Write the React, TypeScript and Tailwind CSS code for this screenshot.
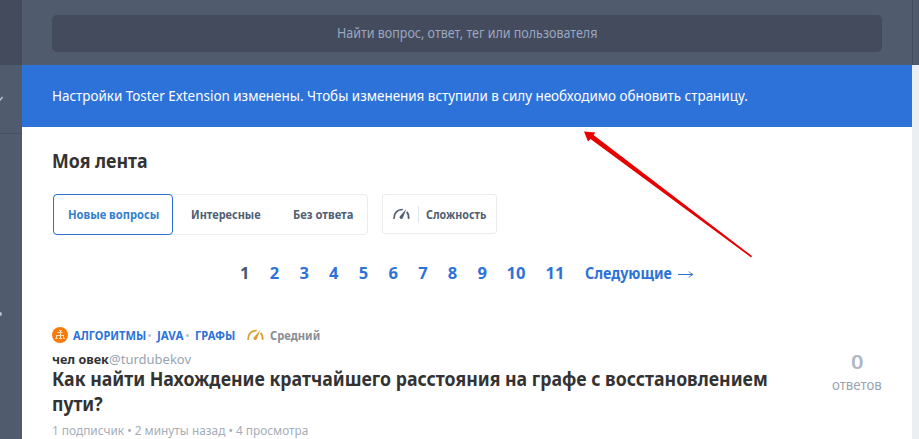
import { useLayoutEffect, useRef } from "react";

type FitProps = { children: string; className: string };

// One line of text, condensed horizontally to the width of its box.
function Fit({ children, className }: FitProps) {
  const box = useRef<HTMLSpanElement>(null);
  const text = useRef<HTMLSpanElement>(null);
  useLayoutEffect(() => {
    if (!box.current || !text.current) return;
    const ratio = box.current.clientWidth / text.current.offsetWidth;
    text.current.style.transform = `scaleX(${ratio})`;
  }, []);
  return (
    <span ref={box} className={`block shrink-0 whitespace-nowrap ${className}`}>
      <span ref={text} className="inline-block origin-left">
        {children}
      </span>
    </span>
  );
}

function Gauge({ className }: { className: string }) {
  return (
    <svg viewBox="0 0 17 12" className={`h-3 w-[17px] shrink-0 ${className}`} fill="none" stroke="currentColor">
      <path d="M1.2 10.800C.7 5.200 4 1.600 9.800 1.500" strokeWidth="1.7" />
      <path d="M13.7 3.900C15.200 5.500 15.900 7.700 15.600 10.800" strokeWidth="1.7" />
      <path d="M13.300 1 9.800 10a1.700 1.700 0 0 1-3.100-1.500Z" fill="currentColor" stroke="none" />
    </svg>
  );
}

function TagIcon() {
  return (
    <svg viewBox="0 0 16 16" className="h-4 w-4 shrink-0">
      <circle cx="8" cy="8" r="8" fill="#f97a0b" />
      <g fill="none" stroke="#ffe0bd" strokeWidth="1">
        <path d="M8.500 3v9M5.500 5.500h5M4.500 8.500h7M4.500 8v3M11.500 8v3" />
        <path d="M7 3.500h3M3 11.500h3M7 11.500h3M11 11.500h2" />
      </g>
    </svg>
  );
}

const pages = ["2", "3", "4", "5", "6", "7", "8", "9"];

export default function App() {
  return (
    <div className="flex h-[439px] w-[919px] overflow-hidden bg-white font-['Noto_Sans','Open_Sans',sans-serif]">
      <aside className="flex w-[22px] shrink-0 flex-col bg-[#505b6e]">
        <div className="h-[65px] bg-[#434b5d]" />
        <div className="h-[69px] border-b border-[#465064] pt-[31px]">
          <svg viewBox="0 0 4 6" className="h-1.5 w-1" fill="none" stroke="#b4bfd0" strokeWidth="1.5">
            <path d="M-2 1 0 4 2.6 1" />
          </svg>
        </div>
        <div className="mt-[178px] h-1 w-0.5 rounded-r-full bg-[#b4bfd0]" />
      </aside>

      <main className="relative flex w-[890px] shrink-0 flex-col">
        <header className="flex h-[65px] shrink-0 bg-[#505b6e] px-[30px] pt-[15px]">
          <div className="flex h-[37px] w-full justify-center rounded-[5px] bg-[#434b5d] text-[#9ba7c0]">
            <Fit className="w-[260px] text-[13.5px] leading-[36px]">Найти вопрос, ответ, тег или пользователя</Fit>
          </div>
        </header>
        <div className="h-[62px] shrink-0 bg-[#2d72d9] px-[30px] text-white">
          <Fit className="w-[696px] text-[14.5px] leading-[61px]">
            Настройки Toster Extension изменены. Чтобы изменения вступили в силу необходимо обновить страницу.
          </Fit>
        </div>

        <div className="px-[30px] pt-[18px]">
          <h1 className="text-[#333]">
            <Fit className="h-[30px] w-24 text-[20px] font-bold leading-[32px]">Моя лента</Fit>
          </h1>

          <div className="mt-[19px] flex items-start pl-px text-[12.5px] font-bold leading-[38px] text-[#505f74]">
            <div className="flex h-[41px] w-[315px] rounded-sm border border-[#ececec]">
              <div className="-ml-px -mt-px h-[41px] w-[120px] rounded-sm border border-[#2d72c9] pl-3.5 pt-px text-[#3480cc]">
                <Fit className="w-[91px]">Новые вопросы</Fit>
              </div>
              <Fit className="ml-[18px] w-[70px] pt-px">Интересные</Fit>
              <Fit className="ml-8 w-[60px] pt-px">Без ответа</Fit>
            </div>
            <div className="ml-3.5 flex h-10 w-[115px] items-center rounded-[3px] border border-[#ececec] pl-2.5">
              <Gauge className="text-[#505f74]" />
              <span className="ml-2 h-[17px] w-px bg-[#dfe5ec]" />
              <Fit className="ml-[7px] w-[60px] pt-px">Сложность</Fit>
            </div>
          </div>

          <nav className="mt-[25px] flex h-[26px] justify-start pl-[188px] text-[16.5px] font-bold leading-[26px] text-[#2d72d9]">
            <Fit className="w-[9px] text-[#455a70]">1</Fit>
            {pages.map((p) => (
              <Fit key={p} className="ml-[20.7px] w-[9px]">
                {p}
              </Fit>
            ))}
            <Fit className="ml-[20px] w-[19px]">10</Fit>
            <Fit className="ml-5 w-[19px]">11</Fit>
            <Fit className="ml-5 w-[87px]">Следующие</Fit>
            <svg viewBox="0 0 16 10" className="ml-1.5 mt-[9px] h-2.5 w-4" fill="none" stroke="currentColor">
              <path d="M0 5.5h14" />
              <path d="M11 2.5q1.500 2.300 4 3-2.500.7-4 3" />
            </svg>
          </nav>

          <div className="mt-[39px] flex h-5 items-center text-[12px] font-bold leading-5 text-[#2d72d9]">
            <TagIcon />
            <Fit className="ml-[5px] w-[73px] pt-px">АЛГОРИТМЫ</Fit>
            <span className="ml-0.5 h-[3px] w-[3px] rounded-full bg-[#b9c2cc]" />
            <Fit className="ml-1.5 w-[26px] pt-px">JAVA</Fit>
            <span className="ml-[3px] h-[3px] w-[3px] rounded-full bg-[#b9c2cc]" />
            <Fit className="ml-[6px] w-10 pt-px">ГРАФЫ</Fit>
            <Gauge className="ml-3 text-[#d6a02b]" />
            <Fit className="ml-1.5 w-[50px] pt-px text-[12.5px] text-[#888d94]">Средний</Fit>
          </div>

          <article className="flex justify-between pt-[5px]">
            <div className="pt-0.5">
              <div className="flex h-3.5 text-[13px] leading-[14px]">
                <Fit className="w-[57px] font-bold text-[#333]">чел овек</Fit>
                <Fit className="w-[82px] text-[#98a3b1]">@turdubekov</Fit>
              </div>
              <h2 className="text-[20px] font-bold leading-[25px] text-[#333]">
                <Fit className="h-[25px] w-[716px]">Как найти Нахождение кратчайшего расстояния на графе с восстановлением</Fit>
                <Fit className="h-[25px] w-[51px]">пути?</Fit>
              </h2>
              <Fit className="mt-1.5 h-4 w-[256px] text-[13px] leading-4 text-[#a4adb8]">
                1 подписчик • 2 минуты назад • 4 просмотра
              </Fit>
            </div>
            <div className="flex w-[50px] flex-col items-center">
              <Fit className="h-6 w-3 text-[20px] font-semibold leading-6 text-[#adb8c4]">0</Fit>
              <Fit className="mt-0.5 h-[18px] w-[50px] text-[14px] leading-[18px] text-[#98a3b1]">ответов</Fit>
            </div>
          </article>
        </div>

        <svg viewBox="0 0 170 130" className="absolute left-[561px] top-[130px] h-[130px] w-[170px]" fill="#e80000">
          <path d="M1 1.500 12.500 2.500 10.500 5 169 126 168.200 127.500 7.500 9 5 11.500Z" />
        </svg>
      </main>

      <div className="flex w-[7px] shrink-0 flex-col bg-[#ebeff2]">
        <div className="h-[65px] border-l border-[#434b5d] bg-[#505b6e]" />
      </div>
    </div>
  );
}
